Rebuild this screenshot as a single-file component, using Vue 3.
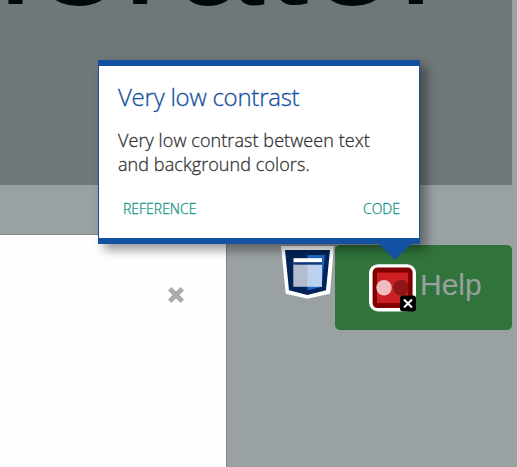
<script setup>
const popup = {
  title: 'Very low contrast',
  text: 'Very low contrast between text and background colors.',
}
</script>

<template>
  <main class="page">
    <header class="banner"><span class="wordmark">nerator</span></header>
    <section class="content">
      <div class="panel">
        <svg class="close" viewBox="0 0 16 16" role="img" aria-label="Close">
          <path d="M1.7 1.7 14.3 14.3M14.3 1.7 1.7 14.3" />
        </svg>
      </div>
      <div class="tools">
        <svg class="shield" viewBox="0 0 54 54" aria-hidden="true">
          <path d="M0 1H52.9L49 48.7 26.4 53.7 4.7 48.7Z" fill="#fff" />
          <path d="M4 5H49L45 45.3 26.4 50 8 45.3Z" fill="#002457" />
          <path d="M26.4 10H44L40.5 42 26.4 45.3Z" fill="#1f65c6" />
          <path d="M12.3 13H41V41.8H12.3Z" fill="#fff" opacity=".7" />
          <path d="M12.3 18.4H41" stroke="#0c397a" stroke-width="2.6" />
          <path d="M13 15.3H40.7" stroke="#fff" stroke-width="3.6" />
        </svg>
        <button class="help">
          <svg class="warning" viewBox="0 0 48 48" aria-hidden="true">
            <rect width="47" height="47.3" y=".2" rx="9" fill="#fff" />
            <rect width="40" height="40.5" x="3.6" y="3.6" rx="5" fill="#800000" />
            <rect width="31" height="30.5" x="8" y="8.6" fill="#cc2022" />
            <circle cx="15" cy="23.8" r="7.7" fill="#f0bebe" />
            <circle cx="32" cy="23.8" r="7.7" fill="#8e1518" />
            <rect width="16" height="16" x="31" y="31.5" rx="3" fill="#000" />
            <path d="m35 35.5 8 8m0-8-8 8" stroke="#fff" stroke-width="2" />
          </svg>
          <span>Help</span>
        </button>
      </div>
    </section>
    <aside class="popup">
      <h2>{{ popup.title }}</h2>
      <p>{{ popup.text }}</p>
      <div class="links"><a>REFERENCE</a><a>CODE</a></div>
    </aside>
  </main>
</template>

<style>
body { margin: 0; }
</style>

<style scoped>
.page {
  position: relative;
  width: 517px;
  height: 467px;
  overflow: hidden;
  background: #9aa1a2;
}
.banner {
  width: 512px;
  height: 185px;
  overflow: hidden;
  background: #6f7778;
}
.wordmark {
  display: block;
  margin: -141px 0 0 -56px;
  font: 160px/180px "Liberation Sans", sans-serif;
  color: #000808;
  white-space: nowrap;
}
.content {
  display: flex;
  padding-top: 49px;
}
.panel {
  box-sizing: border-box;
  display: flex;
  justify-content: flex-end;
  align-items: flex-start;
  flex: none;
  width: 227px;
  height: 240px;
  padding: 52px 42.5px 0 0;
  border: solid #858787;
  border-width: 1px 1px 0 0;
  background: #fefefe;
}
.close {
  width: 16px;
  height: 16px;
  overflow: visible;
  fill: none;
  stroke: #aaa;
  stroke-width: 4.8;
}
.tools {
  display: flex;
  align-items: flex-start;
  padding: 11px 0 0 54px;
}
.shield {
  width: 54px;
  height: 54px;
  flex: none;
}
.help {
  box-sizing: border-box;
  display: flex;
  flex: none;
  align-items: center;
  gap: 3px;
  width: 177px;
  height: 85px;
  padding: 0 0 0 34px;
  border: 0;
  border-radius: 5px;
  background: #30743b;
  color: #9aa1a2;
  font: 30px/40px "Liberation Sans", sans-serif;
}
.help span { margin-top: -6px; }
.warning {
  width: 48px;
  height: 48px;
  flex: none;
}
.popup {
  position: absolute;
  top: 60px;
  left: 98px;
  box-sizing: border-box;
  width: 322px;
  height: 184px;
  padding: 14px 19px 0;
  border: solid #1551a3;
  border-width: 6px 1px;
  background: #fff;
  box-shadow: 6px 6px 10px rgba(0, 0, 0, .4);
  font-family: "Open Sans", sans-serif;
  font-weight: 300;
  -webkit-text-stroke-width: .3px;
  color: #333;
}
.popup::after {
  content: "";
  position: absolute;
  top: 177px;
  left: 279px;
  border: 17px solid transparent;
  border-top-color: #1551a3;
  border-bottom: 0;
}
h2 {
  margin: 0;
  font-size: 24px;
  font-weight: 300;
  line-height: 34px;
  letter-spacing: -.25px;
  color: #1551a3;
}
p {
  margin: 14px 0 0;
  font-size: 18px;
  line-height: 24px;
  letter-spacing: .08px;
}
.links {
  display: flex;
  justify-content: space-between;
  padding: 23px 0 0 5px;
  font-size: 14px;
  line-height: 20px;
  color: #159588;
}
</style>
